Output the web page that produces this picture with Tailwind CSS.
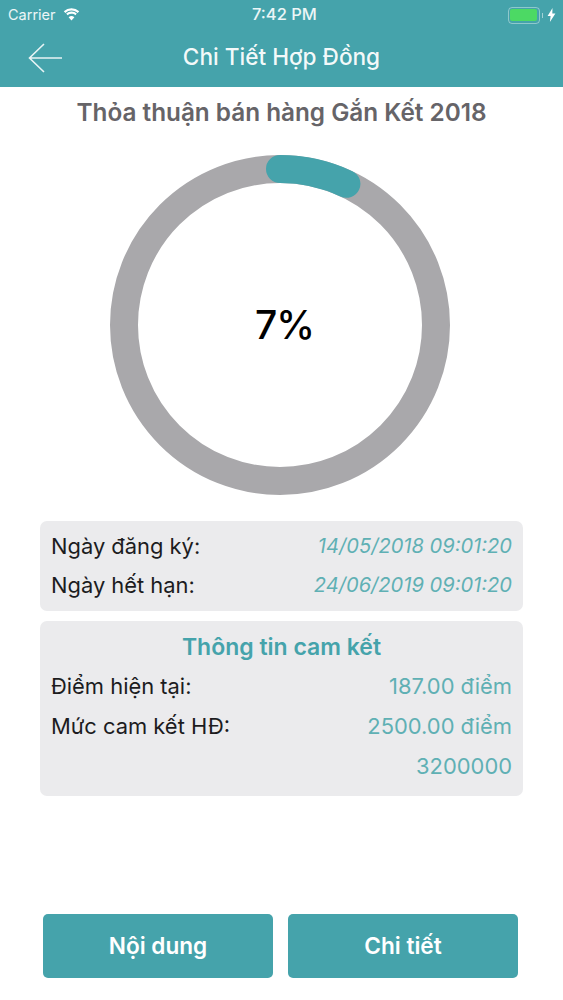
<!DOCTYPE html>
<html><head><meta charset="utf-8"><script src="https://cdn.jsdelivr.net/npm/@tailwindcss/browser@4"></script></head>
<body class="bg-white">
<div class="w-[563px] h-[1000px] overflow-hidden flex flex-col font-['Inter','Noto_Sans',sans-serif]">
  <header class="h-[87px] bg-[#45a3ab] text-white flex flex-col shrink-0">
    <div class="h-[29px] pt-[1px] pl-[8px] pr-[7px] flex items-center justify-between relative text-[14.5px] text-white/90">
      <div class="flex items-center gap-[6px]">
        <span>Carrier</span>
        <svg width="19" height="14" viewBox="0 0 19 14" fill="#fff" class="-mt-[2px]"><path d="M9.500 13.500 6.600 10.200a4.300 4.300 0 0 1 5.800 0z"/><path d="M9.500 3.600c2.400 0 4.600.9 6.200 2.400l1.500-1.700A11.400 11.400 0 0 0 9.500 1.200 11.400 11.400 0 0 0 1.800 4.300L3.300 6a9 9 0 0 1 6.200-2.400z"/><path d="M9.500 6.800c1.500 0 2.800.5 3.900 1.400l1.400-1.600A8.100 8.100 0 0 0 9.500 4.600a8.100 8.100 0 0 0-5.300 2l1.400 1.600a6 6 0 0 1 3.900-1.400z"/></svg>
      </div>
      <span class="absolute left-[252px] top-[4px] font-medium leading-[20px] text-[16.500px]">7:42 PM</span>
      <div class="flex items-center gap-[2px]">
        <div class="w-[32px] h-[17px] rounded-[4px] border border-white/40 p-[1.5px]"><div class="w-full h-full rounded-[2px] bg-[#4cd964]"></div></div>
        <div class="w-[1.5px] h-[5px] bg-white/50"></div>
        <svg width="9" height="14" viewBox="0 0 9 14" fill="#fff" class="ml-[2px]"><path d="M5.500 0 .6 8h3L2.900 14 8.400 5.600h-3.100z"/></svg>
      </div>
    </div>
    <div class="flex-1 relative flex items-center justify-center pb-[2px]">
      <svg class="absolute left-[27px] top-[14px]" width="36" height="30" viewBox="0 0 36 30" fill="none" stroke="#e8f4f5" stroke-width="1.600"><path d="M35 15H2M17 1 2.500 15 17 29"/></svg>
      <h1 class="text-[22.600px] font-medium leading-[30px] text-white/95">Chi Tiết Hợp Đồng</h1>
    </div>
  </header>
  <h2 class="mt-[10px] h-[30px] leading-[30px] text-center text-[24.300px] font-semibold text-[#666468]">Thỏa thuận bán hàng Gắn Kết 2018</h2>
  <div class="mt-[28px] ml-[110px] relative w-[340px] h-[340px]">
    <svg width="340" height="340" viewBox="0 0 340 340" fill="none" class="block">
      <circle cx="170" cy="170" r="156" stroke="#a9a8ab" stroke-width="28"/>
      <path d="M170 14A156 156 0 0 1 236.400 28.800" stroke="#45a3ab" stroke-width="28" stroke-linecap="round"/>
    </svg>
    <div class="absolute inset-0 pl-[9px] flex items-center justify-center text-[39px] font-medium text-black tracking-[-1px]">7%</div>
  </div>
  <section class="mt-[26px] mx-[40px] w-[483px] h-[90px] rounded-[7px] bg-[#ebebed] px-[11px] py-[6px] text-[21.900px]">
    <div class="flex justify-between items-center h-[39px]"><span class="text-[#1c1c1e]">Ngày đăng ký:</span><span class="italic text-[20.100px] text-[#5fb0b4]">14/05/2018 09:01:20</span></div>
    <div class="flex justify-between items-center h-[39px]"><span class="text-[#1c1c1e]">Ngày hết hạn:</span><span class="italic text-[20.100px] text-[#5fb0b4]">24/06/2019 09:01:20</span></div>
  </section>
  <section class="mt-[10px] mx-[40px] w-[483px] h-[175px] rounded-[7px] bg-[#ebebed] px-[11px] pt-[9px] text-[21.900px]">
    <h3 class="h-[34px] leading-[34px] text-center font-semibold text-[23px] text-[#45a3ab]">Thông tin cam kết</h3>
    <div class="flex justify-between items-center h-[40px] mt-[2px]"><span class="text-[#1c1c1e]">Điểm hiện tại:</span><span class="text-[#5fb0b4] text-[21.900px]">187.00 điểm</span></div>
    <div class="flex justify-between items-center h-[40px]"><span class="text-[#1c1c1e]">Mức cam kết HĐ:</span><span class="text-[#5fb0b4] text-[21.900px]">2500.00 điểm</span></div>
    <div class="flex justify-end items-center h-[40px]"><span class="text-[#5fb0b4] text-[21.900px]">3200000</span></div>
  </section>
  <div class="mt-[118px] ml-[43px] flex gap-[15px]">
    <button class="w-[230px] h-[64px] rounded-[5px] bg-[#45a3ab] text-white text-[22.600px] font-semibold">Nội dung</button>
    <button class="w-[230px] h-[64px] rounded-[5px] bg-[#45a3ab] text-white text-[22.600px] font-semibold">Chi tiết</button>
  </div>
</div>
</body></html>
